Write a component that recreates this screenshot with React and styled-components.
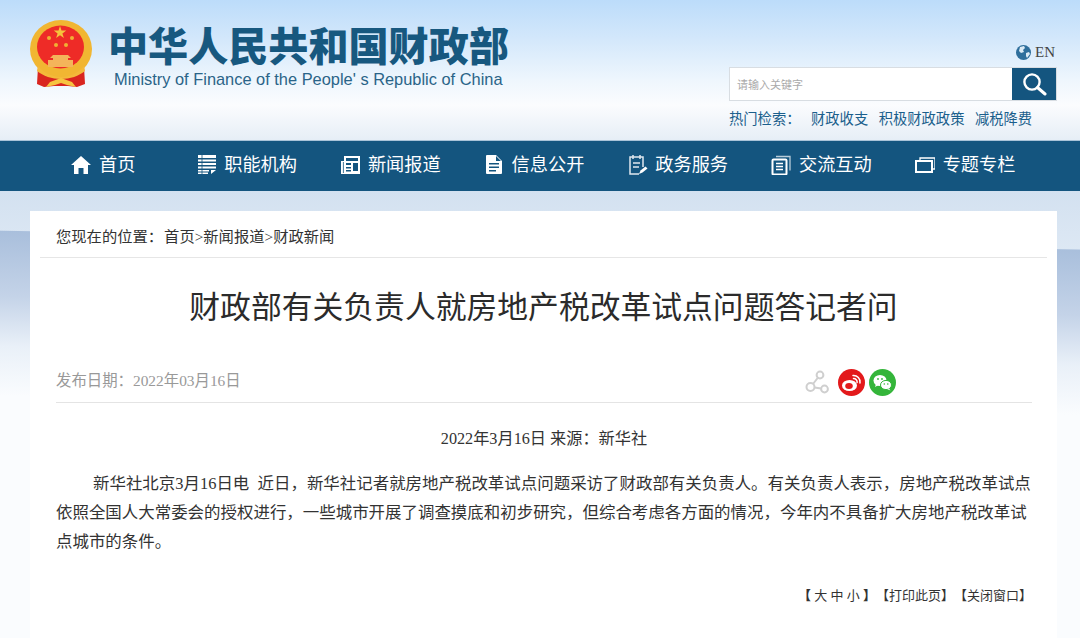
import React from 'react'
import styled, { createGlobalStyle } from 'styled-components'

const SERIF = `"Liberation Serif", "Noto Sans CJK SC", serif`
const BLUE = '#14557f'

const GlobalStyle = createGlobalStyle`
  html, body {
    margin: 0;
    height: 100%;
    overflow: hidden;
  }
  body {
    font-family: ${SERIF};
    background:
      linear-gradient(181deg, rgba(169, 191, 220, 0) 249px, #a9bfdc 250px, #c4d3e8 315px, #e9f0f8 365px, #fafcfe 415px, rgba(250, 252, 254, 1) 100%),
      linear-gradient(180deg, #bcdcfa 0, #d4e8fb 40px, #eef6fd 80px, #fbfcfe 105px, #e6eef6 140px, #d3e1f0 191px, #dde8f4 250px);
  }
`

const Page = styled.div`
  width: 1080px;
  height: 638px;
  overflow: hidden;
`

const Header = styled.header`
  height: 140px;
  display: flex;
  justify-content: space-between;
  box-sizing: border-box;
  padding: 19px 23px 0 30px;
`

const Brand = styled.div`
  display: flex;
  gap: 15px;
`

const EmblemSvg = styled.svg`
  margin-top: 1px;
`

const BrandText = styled.div`
  display: flex;
  flex-direction: column;
`

const BrandName = styled.div`
  font-family: "Noto Sans CJK SC", sans-serif;
  font-size: 40.1px;
  font-weight: 900;
  line-height: 50px;
  color: #17587f;
  white-space: nowrap;
`

const BrandEnglish = styled.div`
  font-family: "Liberation Sans", sans-serif;
  font-size: 16.4px;
  line-height: 20px;
  margin: 0 0 0 6px;
  color: #2a6488;
  white-space: nowrap;
`

const HeaderRight = styled.div`
  width: 328px;
  display: flex;
  flex-direction: column;
  padding-top: 25px;
`

const LangRow = styled.div`
  display: flex;
  justify-content: flex-end;
  align-items: center;
  gap: 4px;
  height: 17px;
  font-size: 15px;
  color: #444;
  padding-right: 2px;
`

const SearchBox = styled.div`
  display: flex;
  height: 34px;
  margin-top: 6px;
  background: #fff;
  box-sizing: border-box;
  border: 1px solid #d8dde2;
`

const SearchInput = styled.div`
  flex: 1;
  display: flex;
  align-items: center;
  padding-left: 7px;
  font-size: 11px;
  color: #aaa;
  font-family: "Noto Sans CJK SC", sans-serif;
`

const SearchButton = styled.div`
  width: 44px;
  background: ${BLUE};
  display: flex;
  align-items: center;
  justify-content: center;
`

const HotRow = styled.div`
  display: flex;
  margin-top: 7px;
  font-size: 14.3px;
  line-height: 22px;
  color: #1b5f8c;
  white-space: nowrap;
`

const HotLabel = styled.span`
  width: 82px;
`

const HotLink = styled.a`
  margin-right: 10.5px;
`

const Nav = styled.nav`
  height: 51px;
  background: ${BLUE};
  border-top: 1px solid #a9c3d8;
  box-sizing: border-box;
  display: grid;
  grid-template-columns: repeat(7, 143.7px);
  padding: 0 0 6px 53px;
`

const NavItem = styled.a`
  display: flex;
  align-items: center;
  gap: ${p => p.$gap}px;
  padding-left: ${p => p.$indent || 0}px;
  color: #fff;
  font-size: 18.2px;
  white-space: nowrap;
`

const NavIcon = styled.svg`
  width: 20px;
  height: 22px;
  flex: none;
  margin-top: 2px;
`

const Card = styled.main`
  margin: 20px 23px 0 30px;
  height: 430px;
  background: #fff;
  padding: 0 10px;
  color: #333;
`

const Crumb = styled.div`
  height: 47px;
  padding: 1px 0 0 16px;
  box-sizing: border-box;
  display: flex;
  align-items: center;
  font-size: 15.3px;
  color: #333;
  border-bottom: 1px solid #e6e6e6;
  white-space: nowrap;
`

const CrumbLabel = styled.span`
  margin-right: 1px;
`

const Title = styled.h1`
  margin: 0;
  height: 92px;
  display: flex;
  align-items: center;
  justify-content: center;
  font-size: 30.8px;
  font-weight: 400;
  color: #2b2b2b;
  white-space: nowrap;
`

const Body = styled.div`
  padding: 0 15px 0 16px;
`

const MetaRow = styled.div`
  height: 53px;
  padding-top: 6px;
  box-sizing: border-box;
  display: flex;
  align-items: center;
  justify-content: space-between;
  border-bottom: 1px solid #e4e4e4;
  font-size: 15.4px;
  color: #999;
`

const ShareIcons = styled.div`
  display: flex;
  align-items: center;
  gap: 4px;
  margin: 6px 136px 0 0;
`

const ShareSvg = styled.svg`
  margin-right: 5px;
`

const Source = styled.div`
  margin-top: 23px;
  text-align: center;
  font-size: 16.2px;
  line-height: 26px;
  color: #333;
`

const Article = styled.p`
  margin: 17px 0 0;
  font-size: 16.47px;
  line-height: 29px;
  text-indent: 37px;
  color: #333;
`

const Tools = styled.div`
  margin-top: 30px;
  display: flex;
  justify-content: flex-end;
  font-size: 13px;
  line-height: 20px;
  color: #333;
  white-space: nowrap;
`

const Bracket = styled.b`
  font-weight: 900;
`

function Emblem() {
  return (
    <EmblemSvg width="63" height="68" viewBox="0 0 63 68">
      <path d="M8 47 L7 64 L14 67 L24 66 L38 66 L47 67 L55 64 L54 47 Z" fill="#d9251f" />
      <ellipse cx="31" cy="29" rx="31" ry="29" fill="#f1b632" />
      <ellipse cx="30.500" cy="27" rx="23.500" ry="21.500" fill="#ee2b27" />
      <path d="M30 6l1.500 4.500h4.800l-3.900 2.900 1.500 4.700-3.900-2.900-3.900 2.900 1.500-4.700-3.900-2.900h4.800z" fill="#f5c33c" />
      <circle cx="19" cy="18" r="2" fill="#f0b033" />
      <circle cx="42" cy="18" r="2" fill="#f0b033" />
      <circle cx="26" cy="25" r="2" fill="#f0b033" />
      <circle cx="36" cy="25" r="2" fill="#f0b033" />
      <path d="M23 35h15l3 3h-3v2h5v7H18v-7h5v-2h-3z" fill="#f4b45a" />
      <path d="M8 46c6 7 14 11 23 11s17-4 23-11l1 5c-6 5-15 8-24 8s-18-3-24-8z" fill="#f4b93a" />
      <path d="M16 67l4-5 11-4 11 4 4 5-9-2-6-2-6 2z" fill="#f6c440" />
    </EmblemSvg>
  )
}

function Globe() {
  return (
    <svg width="15" height="15" viewBox="0 0 15 15">
      <circle cx="7.500" cy="7.500" r="7.500" fill="#2f6f9c" />
      <path d="M4 2l4-1 1 2-2 2 1 2-3 1-2-2zM10 8l3-1 1 2-3 4-1-2z" fill="#dcebf5" />
    </svg>
  )
}

function SearchIcon() {
  return (
    <svg width="26" height="26" viewBox="0 0 26 26" fill="none" stroke="#fff">
      <circle cx="11" cy="11" r="7.600" strokeWidth="2.400" />
      <path d="M16.500 16.500L24 23" strokeWidth="3" strokeLinecap="round" />
    </svg>
  )
}

const navIcons = {
  home: (
    <path d="M10 3L20 12h-3v9h-4.500v-6h-5v6H3v-9H0z" fill="#fff" />
  ),
  list: (
    <g fill="#fff">
      <path d="M1 2h18v3H1zM1 6.500h18v2H1zM1 10h18v2H1zM1 13.500h18v2H1zM1 17h11v1.500H1zM1 19.500h10V21H1zM14 17h5l-5 4z" />
      <path d="M5 2v19" stroke={BLUE} strokeWidth="0.800" />
    </g>
  ),
  news: (
    <g>
      <path d="M4 3h16v18H1V8h3z" fill="#fff" />
      <path d="M6 5h12v3H6zM6 10h5v2H6zM6 14h5v1.500H6zM6 17h5v1.500H6zM13 10h5v8h-5z" fill={BLUE} />
      <path d="M3.400 9v11" stroke={BLUE} strokeWidth="0.800" />
    </g>
  ),
  doc: (
    <g>
      <path d="M3 2h9l6 6v12a1 1 0 0 1-1 1H3a1 1 0 0 1-1-1V3a1 1 0 0 1 1-1z" fill="#fff" />
      <path d="M5 10h10v1.500H5zM5 13.500h10V15H5zM5 17h7v1.500H5zM12 3v5h5" fill={BLUE} />
    </g>
  ),
  form: (
    <g fill="none" stroke="#dfe8ef" strokeWidth="1.500">
      <path d="M15 14V4H2v17h9" />
      <path d="M5 2v4M12 2v4M5 10h7M5 14h6" />
      <path d="M11 21l1.500-3.500 5-4 2 2-5 4z" fill="#fff" stroke="none" />
    </g>
  ),
  pages: (
    <g fill="none" stroke="#fff">
      <path d="M5 3.500h14v14" strokeWidth="1.300" opacity="0.700" />
      <rect x="1.500" y="6.500" width="14" height="15" rx="1" strokeWidth="2" />
      <path d="M5 10.500h7M5 13.500h7M5 16.500h7" strokeWidth="1.300" />
    </g>
  ),
  cards: (
    <g fill="none" stroke="#fff">
      <path d="M5 7V5h15v11h-3" strokeWidth="1.300" />
      <rect x="1" y="8" width="16" height="11" strokeWidth="2" />
    </g>
  ),
}

const navItems = [
  { icon: 'home', label: '首页', indent: 18, gap: 8 },
  { icon: 'list', label: '职能机构', gap: 7.500 },
  { icon: 'news', label: '新闻报道', gap: 7.500 },
  { icon: 'doc', label: '信息公开', gap: 7.500 },
  { icon: 'form', label: '政务服务', gap: 7.500 },
  { icon: 'pages', label: '交流互动', gap: 7.500 },
  { icon: 'cards', label: '专题专栏', gap: 7.500 },
]

function ShareIcon() {
  return (
    <ShareSvg width="24" height="24" viewBox="0 0 24 24" fill="none" stroke="#cfcfcf" strokeWidth="2">
      <circle cx="5.500" cy="17" r="4" />
      <circle cx="15" cy="5" r="3.400" />
      <circle cx="19.500" cy="19" r="3.400" />
      <path d="M8 14l5-6.500M9.500 17.500l6.700 1" />
    </ShareSvg>
  )
}

function WeiboIcon() {
  return (
    <svg width="27" height="27" viewBox="0 0 27 27">
      <circle cx="13.500" cy="13.500" r="13.500" fill="#e3191b" />
      <ellipse cx="11.500" cy="16.500" rx="7.500" ry="5.500" fill="#fff" />
      <ellipse cx="11" cy="17" rx="3.800" ry="3" fill="#e3191b" />
      <path d="M15 6.500a6.500 6.500 0 0 1 7 7.500M15.500 9.500a3.500 3.500 0 0 1 3.600 4" fill="none" stroke="#fff" strokeWidth="1.500" strokeLinecap="round" />
    </svg>
  )
}

function WechatIcon() {
  return (
    <svg width="27" height="27" viewBox="0 0 27 27">
      <circle cx="13.500" cy="13.500" r="13.500" fill="#34b53a" />
      <ellipse cx="11" cy="11.500" rx="6.500" ry="5.500" fill="#fff" />
      <path d="M7 15l-1 3 3.500-2z" fill="#fff" />
      <ellipse cx="17" cy="16" rx="5.500" ry="4.600" fill="#fff" stroke="#34b53a" strokeWidth="1" />
      <path d="M20 19.500l1.500 2-3.500-1.500z" fill="#fff" />
      <circle cx="9" cy="10" r="0.900" fill="#34b53a" />
      <circle cx="13" cy="10" r="0.900" fill="#34b53a" />
      <circle cx="15.300" cy="15" r="0.800" fill="#34b53a" />
      <circle cx="18.800" cy="15" r="0.800" fill="#34b53a" />
    </svg>
  )
}

export default function App() {
  return (
    <Page>
      <GlobalStyle />
      <Header>
        <Brand>
          <Emblem />
          <BrandText>
            <BrandName>中华人民共和国财政部</BrandName>
            <BrandEnglish>Ministry of Finance of the People' s Republic of China</BrandEnglish>
          </BrandText>
        </Brand>
        <HeaderRight>
          <LangRow><Globe />EN</LangRow>
          <SearchBox>
            <SearchInput>请输入关键字</SearchInput>
            <SearchButton><SearchIcon /></SearchButton>
          </SearchBox>
          <HotRow>
            <HotLabel>热门检索：</HotLabel>
            <HotLink>财政收支</HotLink>
            <HotLink>积极财政政策</HotLink>
            <HotLink>减税降费</HotLink>
          </HotRow>
        </HeaderRight>
      </Header>
      <Nav>
        {navItems.map(item => (
          <NavItem key={item.label} $indent={item.indent} $gap={item.gap}>
            <NavIcon viewBox="0 0 20 22">{navIcons[item.icon]}</NavIcon>
            {item.label}
          </NavItem>
        ))}
      </Nav>
      <Card>
        <Crumb>
          <CrumbLabel>您现在的位置：</CrumbLabel>首页&gt;新闻报道&gt;财政新闻
        </Crumb>
        <Title>财政部有关负责人就房地产税改革试点问题答记者问</Title>
        <Body>
          <MetaRow>
            <span>发布日期：2022年03月16日</span>
            <ShareIcons>
              <ShareIcon />
              <WeiboIcon />
              <WechatIcon />
            </ShareIcons>
          </MetaRow>
          <Source>2022年3月16日 来源：新华社</Source>
          <Article>
            新华社北京3月16日电&nbsp; 近日，新华社记者就房地产税改革试点问题采访了财政部有关负责人。有关负责人表示，房地产税改革试点依照全国人大常委会的授权进行，一些城市开展了调查摸底和初步研究，但综合考虑各方面的情况，今年内不具备扩大房地产税改革试点城市的条件。
          </Article>
          <Tools>
            <span><Bracket>【</Bracket> 大 中 小 <Bracket>】</Bracket></span>
            <span>【打印此页】</span>
            <span>【关闭窗口】</span>
          </Tools>
        </Body>
      </Card>
    </Page>
  )
}
